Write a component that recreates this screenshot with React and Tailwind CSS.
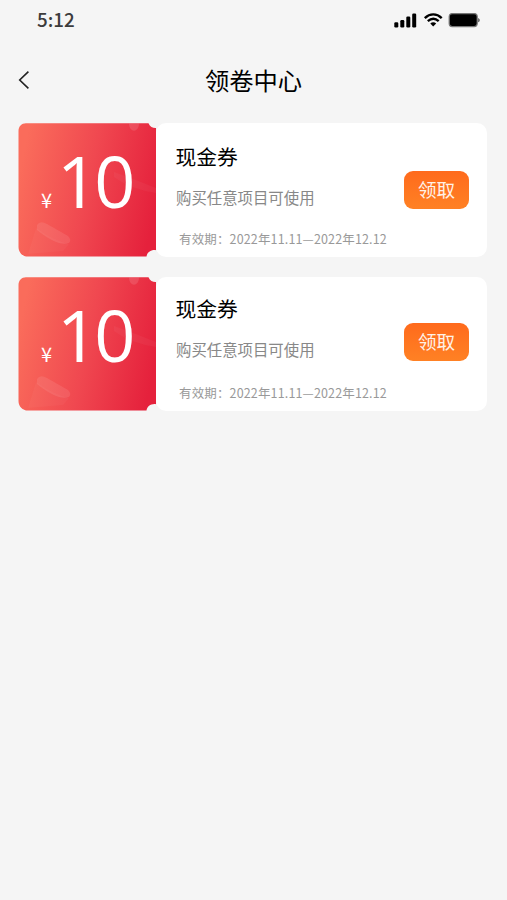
const coupons = [
  {
    id: 1,
    amount: 10,
    name: '现金券',
    desc: '购买任意项目可使用',
    date: '有效期：2022年11.11—2022年12.12',
    titleSpace: 'mt-[18px]',
    dateSpace: 'mt-[21px]',
    buttonSpace: 'mt-[48px]',
    cardSpace: '',
  },
  {
    id: 2,
    amount: 10,
    name: '现金券',
    desc: '购买任意项目可使用',
    date: '有效期：2022年11.11—2022年12.12',
    titleSpace: 'mt-[15.5px]',
    dateSpace: 'mt-[23.5px]',
    buttonSpace: 'mt-[46px]',
    cardSpace: 'mt-[20.5px]',
  },
];

function StatusBar() {
  return (
    <div className="flex h-10 items-center justify-between pl-[37px] pr-[27px] text-[#3c3c3c]">
      <span className="-mt-[2px] text-[18.8px] leading-[38px] font-medium">5:12</span>
      <svg width="87" height="16" viewBox="0 0 87 16" fill="none">
        <g fill="#000">
          <rect x="1.3" y="10.3" width="4" height="5.2" rx="1.2" />
          <rect x="7.3" y="8" width="4" height="7.5" rx="1.2" />
          <rect x="13.3" y="4.5" width="4" height="11" rx="1.2" />
          <rect x="19.2" y="1.5" width="4" height="14" rx="1.2" />
        </g>
        <g stroke="#000" strokeWidth="2.4">
          <path d="M31.8 6.1C36.9 1.1 43.6 1.1 48.7 6.1" />
          <path d="M34.8 9.2C38.2 6.2 42.4 6.2 45.7 9.2" />
        </g>
        <path d="M37.3 11.4C39 9.9 41.5 9.9 43.2 11.4L40.2 14.5Z" fill="#000" />
        <rect x="56.2" y="1.6" width="28" height="13" rx="3" fill="#000" stroke="#777" strokeWidth="1.2" />
        <path d="M85.2 6C87.2 7 87.2 9.4 85.2 10.3Z" fill="#555" />
      </svg>
    </div>
  );
}

function Header() {
  return (
    <header className="grid h-[83px] grid-cols-[100px_1fr_100px] items-center">
      <button className="pl-[18px]" aria-label="返回">
        <svg width="12" height="20" viewBox="0 0 12 20" fill="none" stroke="#222" strokeWidth="1.6" className="-mt-[3px]">
          <path d="M10.4 1.6L1.7 10L10.4 18.4" />
        </svg>
      </button>
      <h1 className="-mt-[4px] text-center text-[24.3px] leading-[36px] font-normal text-black">领卷中心</h1>
    </header>
  );
}

function TicketArt({ id }) {
  return (
    <svg className="absolute inset-0" width="142" height="134" viewBox="0 0 142 134">
      <defs>
        <linearGradient id={`red${id}`} x1="0" y1="0.4" x2="1" y2="0.6">
          <stop offset="0" stopColor="#fa6c5b" />
          <stop offset="0.5" stopColor="#f04850" />
          <stop offset="1" stopColor="#e5213c" />
        </linearGradient>
      </defs>
      <path
        d="M8 0.2H130.5C132 3.8 135 5.2 138 5V127.2C133 126.5 129 129.5 128.5 133.6H10C4.5 133.6 0.5 129.5 0.5 124V8C0.5 3.5 3.5 0.2 8 0.2Z"
        fill={`url(#red${id})`}
      />
      <g fill="#fff">
        <path d="M111 0.5H121C121 10 111 10 111 0.5Z" opacity="0.12" />
        <path d="M96 49Q116 56 138 65V70Q112 66 96 54Z" opacity="0.04" />
        <path d="M19 102Q22 97 29 101L50 113Q54 117 51 120Q40 124 19 107Z" opacity="0.09" />
        <path d="M18 105Q34 117 51 121L45 128L10 131Z" opacity="0.03" />
      </g>
    </svg>
  );
}

function Coupon({ coupon }) {
  return (
    <li className={`flex h-[133.5px] ${coupon.cardSpace}`}>
      <div className="relative flex w-[138px] shrink-0 text-white">
        <TicketArt id={coupon.id} />
        <div className="relative flex items-baseline pl-[23px]">
          <span className="pb-[1px] text-[20px]">¥</span>
          <span className="ml-[5px] font-['Open_Sans',sans-serif] text-[72px] leading-[115px] tracking-[-4px]">{coupon.amount}</span>
        </div>
      </div>
      <div className="flex flex-1 rounded-[10px] bg-white">
        <div className="flex-1 pl-[19.5px] whitespace-nowrap">
          <h2 className={`text-[20.8px] leading-[30px] font-normal text-black ${coupon.titleSpace}`}>{coupon.name}</h2>
          <p className="mt-[14px] pl-[0.5px] text-[15.4px] leading-[24px] text-[#888]">{coupon.desc}</p>
          <p className={`pl-[3.5px] text-[12.5px] leading-[18px] tracking-[0.15px] text-[#999] ${coupon.dateSpace}`}>{coupon.date}</p>
        </div>
        <button
          className={`mr-[18px] flex h-[38px] w-[65px] shrink-0 justify-center rounded-[9px] bg-linear-to-b from-[#ff6a1c] to-[#ff8124] text-[18.6px] leading-[35px] text-[#fff2e8] ${coupon.buttonSpace}`}
        >
          领取
        </button>
      </div>
    </li>
  );
}

export default function App() {
  return (
    <main className="min-h-screen bg-[#f5f5f5] font-['Noto_Sans_CJK_SC',sans-serif]">
      <StatusBar />
      <Header />
      <ul className="pr-[20px] pl-[18px]">
        {coupons.map((coupon) => (
          <Coupon key={coupon.id} coupon={coupon} />
        ))}
      </ul>
    </main>
  );
}
